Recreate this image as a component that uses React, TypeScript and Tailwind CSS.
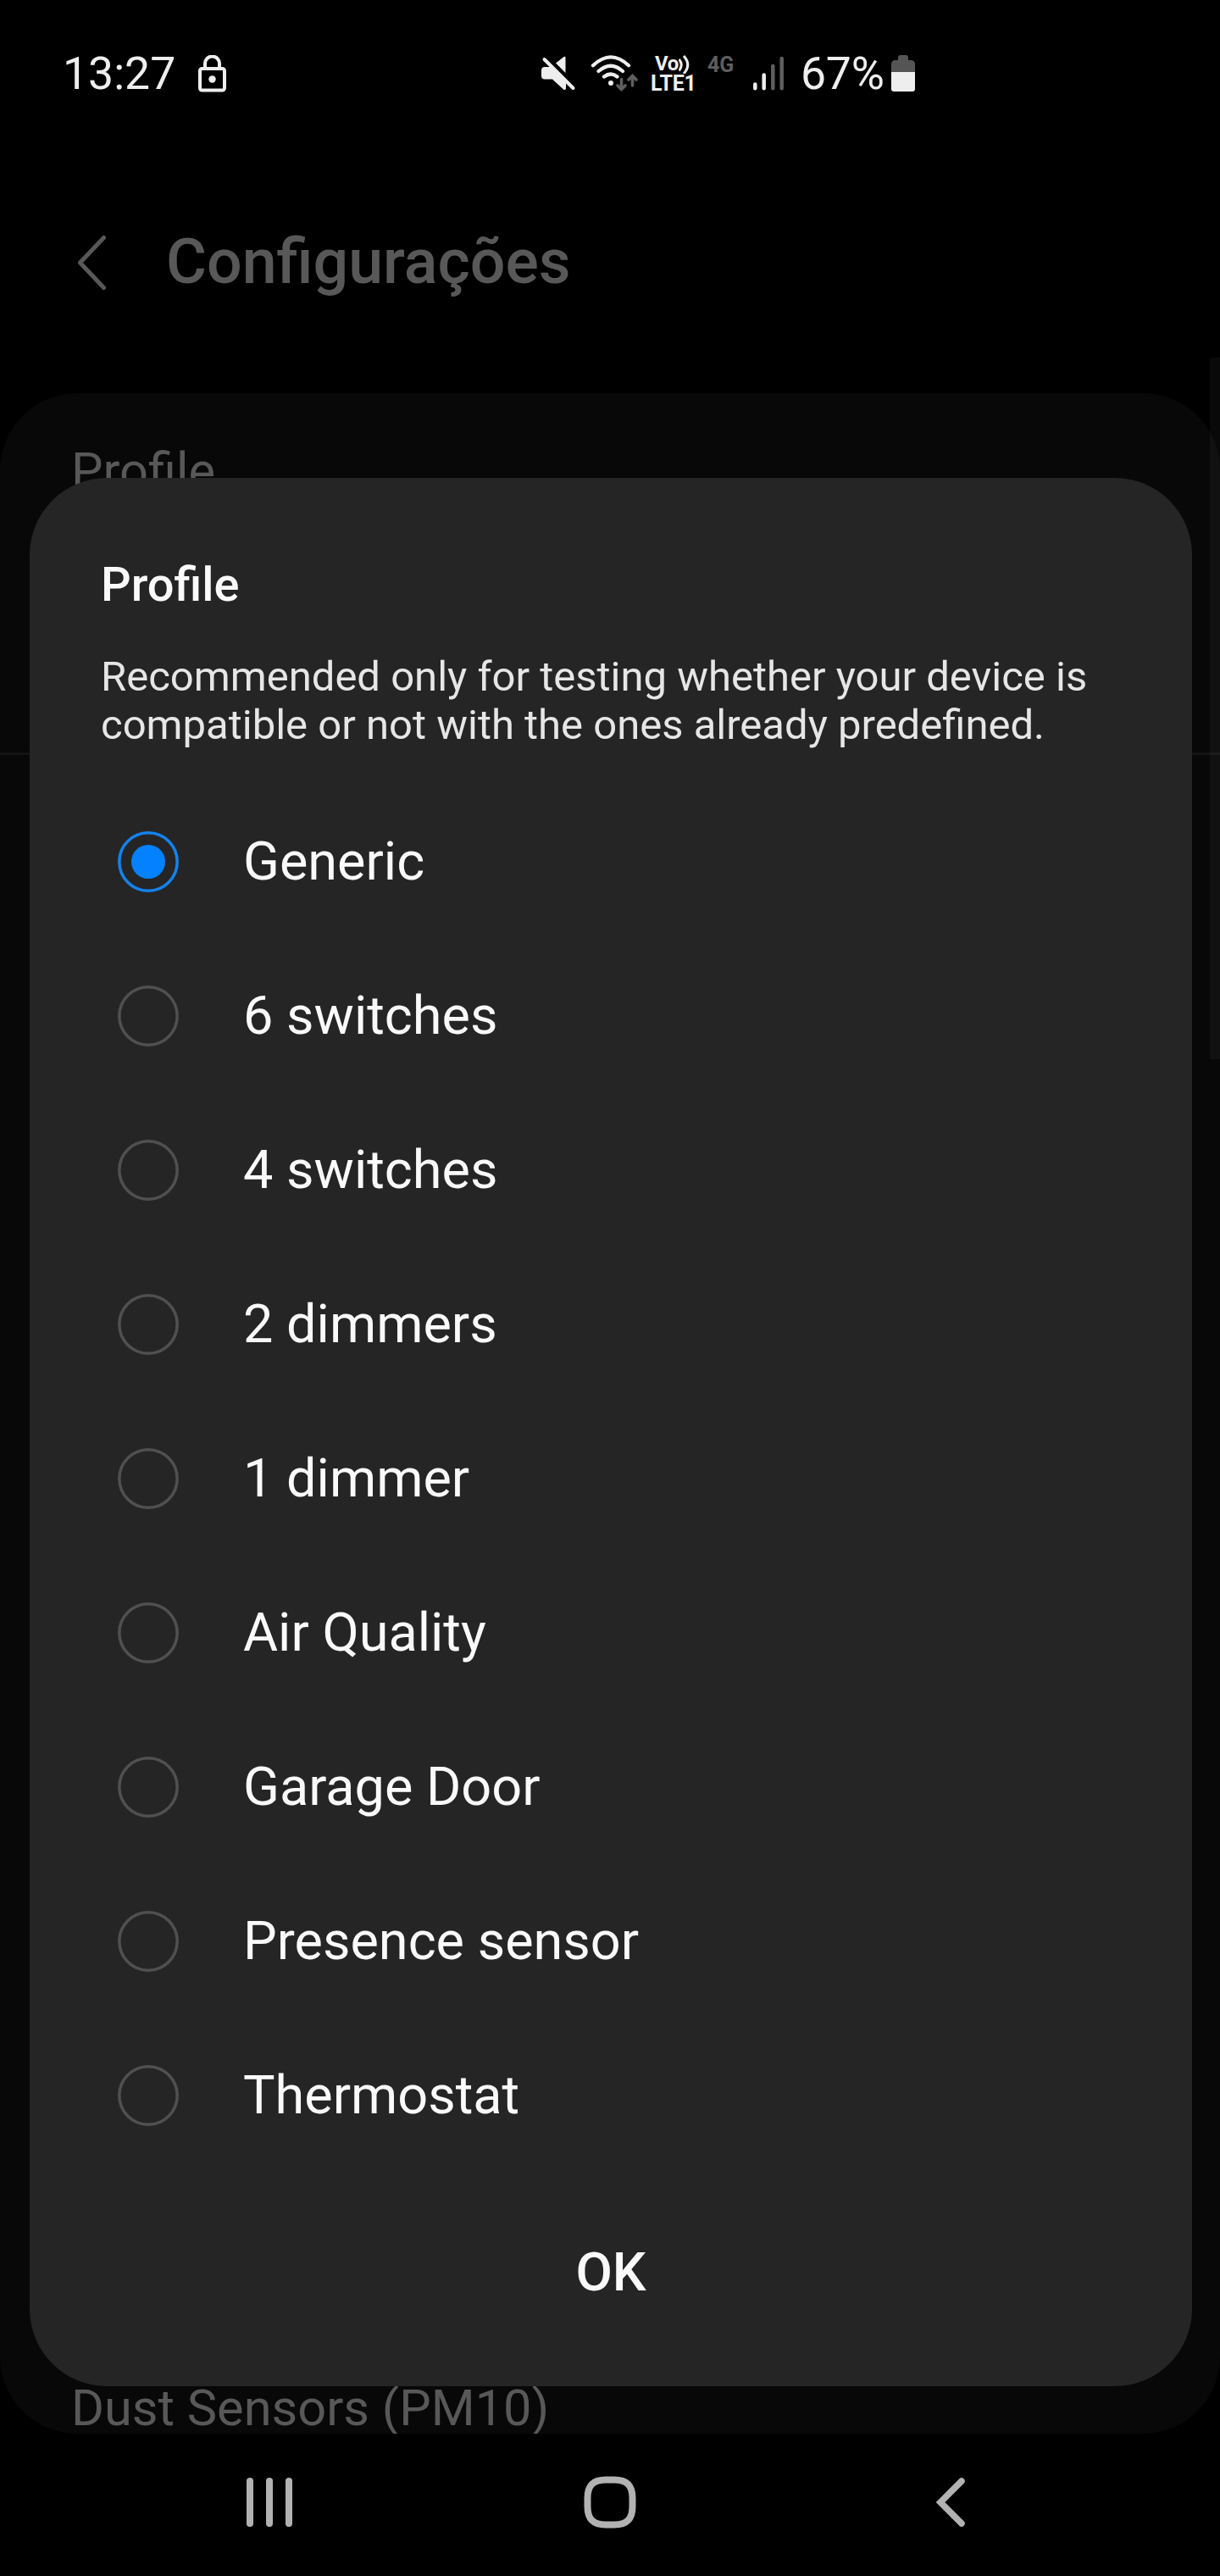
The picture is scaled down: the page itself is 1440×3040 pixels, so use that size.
import React from "react";

const options = [
  "Generic",
  "6 switches",
  "4 switches",
  "2 dimmers",
  "1 dimmer",
  "Air Quality",
  "Garage Door",
  "Presence sensor",
  "Thermostat",
];

function StatusBar() {
  return (
    <div className="flex h-[44px] items-center text-[53.5px] leading-[44px] text-[#eeeeee]">
      <span className="ml-[74px] w-[160px]">13:27</span>
      <svg className="h-[44px] w-[34px]" viewBox="234 65 34 44" fill="none">
        <path d="M242 81V75a8.5 8.5 0 0 1 17 0v6" stroke="#eee" strokeWidth="4" />
        <rect x="236" y="81" width="29" height="25.5" rx="2.5" stroke="#eee" strokeWidth="4" />
        <circle cx="250.500" cy="93.500" r="4.200" fill="#eee" />
      </svg>
      <svg className="ml-[370px] h-[44px] w-[42px]" viewBox="638 65 42 44">
        <path d="M656 74.500 665.500 67q2-1 2 1V86Z" fill="#eee" />
        <path d="M642 79H650L668 97V104q0 3-3 1.500L652 93.500H643q-4 0-4-4V83q0-4 4-4Z" fill="#eee" />
        <path d="M642.500 70 676.500 104" stroke="#eee" strokeWidth="4" strokeLinecap="round" />
      </svg>
      <svg className="ml-[17px] h-[44px] w-[57px]" viewBox="697 65 57 44" fill="none" strokeLinecap="round">
        <path d="M700 77.300Q721 57.500 742 77.300M706.500 84Q721 71.500 735 84M713 90.500Q721 84.500 728.500 90.500" stroke="#eee" strokeWidth="4.200" />
        <circle cx="721" cy="98" r="3" fill="#eee" />
        <path d="M733.500 93.500V105M729 101l4.500 4.500L738 101M746.500 101V90M742 94l4.500-4.500L751 94" stroke="#5e5e5e" strokeWidth="3.600" />
      </svg>
      <div className="ml-[14px] flex h-[44px] w-[53px] flex-col font-bold">
        <div className="flex h-[22px] items-center pl-[5px]">
          <span className="w-[28px] pb-[1px] text-[24px] leading-[21px] tracking-[-0.5px]">Vo</span>
          <svg className="h-[22px] w-[14px]" viewBox="803 65 14 22" fill="none" stroke="#eee" strokeWidth="3">
            <path d="M803.500 70q5.500 6.500 0 13.500M809 66q9.500 10.500 0 21" />
          </svg>
        </div>
        <span className="pt-[1px] text-[25px] leading-[22px] tracking-[-0.3px]">LTE1</span>
      </div>
      <span className="-mt-[21px] ml-[14px] w-[34px] text-[25px] font-bold leading-[26px] text-[#5e5e5e]">4G</span>
      <svg className="ml-[19px] h-[44px] w-[38px]" viewBox="888 65 38 44" strokeWidth="4.500" strokeLinecap="round">
        <path d="M891.300 99.500V104.300M901.700 88.500V104.300" stroke="#eee" />
        <path d="M912.300 78V104.300M922.700 69V104.300" stroke="#5e5e5e" />
      </svg>
      <span className="ml-[19px] w-[107px] tracking-[-0.2px]">67%</span>
      <svg className="h-[44px] w-[28px]" viewBox="1052 65 28 44">
        <path d="M1060 71v-3q0-3 3-3h6q3 0 3 3v3h3q5 0 5 5v9h-28v-9q0-5 5-5Z" fill="#555" />
        <path d="M1052 85h28v20q0 3-3 3h-22q-3 0-3-3Z" fill="#eee" />
      </svg>
    </div>
  );
}

function Radio({ checked }: { checked: boolean }) {
  return (
    <svg className="size-[72px]" viewBox="0 0 72 72" fill="none">
      <circle cx="36" cy="36" r="34.2" stroke={checked ? "#1482ed" : "#505050"} strokeWidth="3.5" />
      {checked && <circle cx="36" cy="36" r="20" fill="#0381fe" />}
    </svg>
  );
}

function NavBar() {
  return (
    <nav className="flex h-[168px] items-center pb-[6px] text-[#b2b2b2]">
      <div className="ml-[291px] flex w-[54px] justify-between">
        <i className="h-[58px] w-2 rounded-full bg-current" />
        <i className="h-[58px] w-2 rounded-full bg-current" />
        <i className="h-[58px] w-2 rounded-full bg-current" />
      </div>
      <svg className="ml-[344px] h-[62px] w-[62px]" viewBox="0 0 62 62" fill="none" stroke="currentColor" strokeWidth="8">
        <path d="M31 4.500H36C51 4.500 57.500 11 57.500 26V36C57.500 51 51 57.500 36 57.500H26C11 57.500 4.500 51 4.500 36V26C4.500 11 11 4.500 26 4.500Z" />
      </svg>
      <svg className="ml-[353px] h-[58px] w-[36px]" viewBox="1104 2924 36 58" fill="none" stroke="currentColor" strokeWidth="7.500" strokeLinecap="round">
        <path d="M1135 2928 1110 2953 1135 2978" />
      </svg>
    </nav>
  );
}

export default function App() {
  return (
    <div className="relative flex h-[3040px] w-[1440px] flex-col overflow-hidden bg-black pt-[65px] font-['Roboto',sans-serif]">
      <StatusBar />

      <header className="mt-[149px] flex h-[104px] items-center">
        <svg className="ml-[91px] h-[66px] w-[36px]" viewBox="91 277 36 66" fill="none" stroke="#585858" strokeWidth="5" strokeLinecap="round" strokeLinejoin="round">
          <path d="M122.500 280.500 94.500 310 122.500 339.500" />
        </svg>
        <h1 className="mb-[3px] ml-[69px] text-[73.5px] font-medium leading-[86px] text-[#585858]">Configurações</h1>
      </header>

      <main className="mt-[102px] flex h-[2408px] flex-col overflow-hidden rounded-[91px] bg-[#080808] text-[59.5px] leading-[70px] text-[#585858]">
        <div className="h-[427px] shrink-0 border-b-[3px] border-[#131313] px-[84px] pt-[57px]">Profile</div>
        <div className="mt-auto h-[65px] px-[84px]">Dust Sensors (PM10)</div>
      </main>
      <NavBar />

      <div className="absolute left-[1428px] top-[422px] h-[828px] w-[12px] bg-white/[0.035]" />

      <section
        role="dialog"
        className="absolute left-[35px] top-[564px] flex h-[2252px] w-[1372px] flex-col rounded-[91px] bg-[#252525] pt-[93px] text-[#fafafa]"
      >
        <h2 className="px-[84px] text-[56px] font-medium leading-[66px]">Profile</h2>
        <p className="mt-[47px] px-[84px] text-[49px] leading-[57px] text-[#e6e6e6]">
          Recommended only for testing whether your device is
          <br />
          compatible or not with the ones already predefined.
        </p>
        <ul className="mt-[42px]">
          {options.map((label, i) => (
            <li key={label} className="flex h-[182px] items-center pl-[104px]">
              <Radio checked={i === 0} />
              <span className="ml-[76px] text-[63px] leading-[74px]">{label}</span>
            </li>
          ))}
        </ul>
        <button className="mt-[81px] text-center text-[63px] font-medium leading-[74px]">OK</button>
      </section>
    </div>
  );
}
